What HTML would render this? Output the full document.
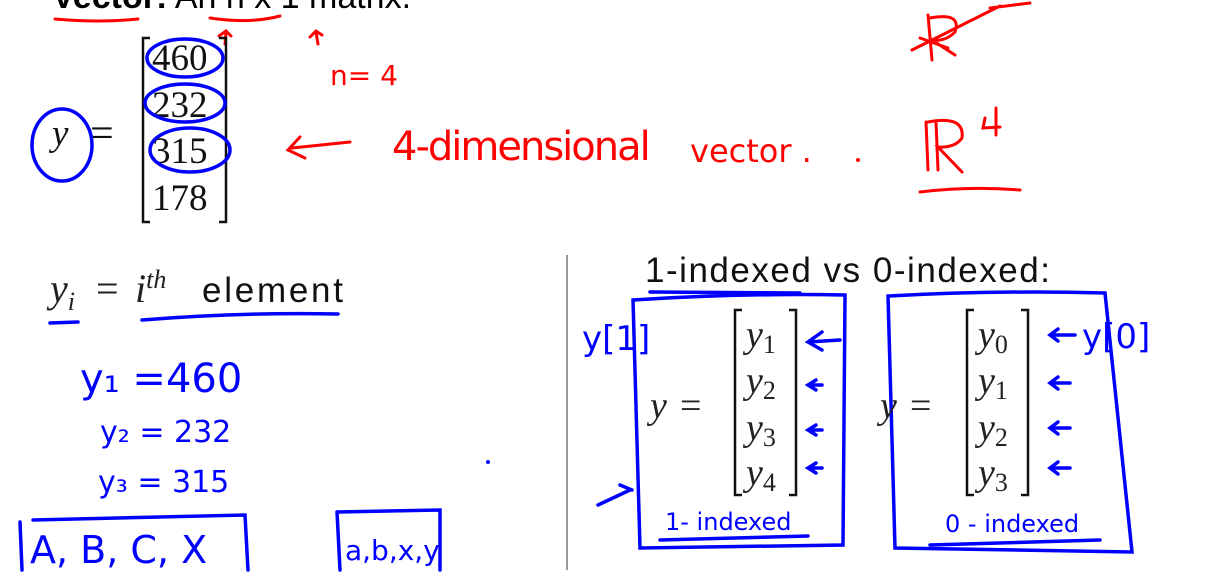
<!DOCTYPE html><html><head><style>
body{margin:0;width:1220px;height:581px;background:#fff;overflow:hidden;position:relative}
svg{position:absolute;left:0;top:0}
</style></head><body>
<svg width="1220" height="581" viewBox="0 0 1220 581">
<text x="52" y="8" font-family="Liberation Sans, sans-serif" font-size="34"><tspan font-weight="bold">Vector:</tspan> An n x 1 matrix.</text>
<g fill="none" stroke="#f00" stroke-width="3" stroke-linecap="round">
<path d="M55 19 Q100 23 138 19"/><path d="M210 18 Q250 24 280 16"/>
<path d="M225 44 L226 33 M219 36 L226 31 L231 36"/><path d="M318 44 L316 32 M310 37 L316 31 L322 35"/>
<path d="M292 148 L350 142 M300 137 L288 150 L305 158"/>
<path d="M920 38 L948 48 M928 15 L932 60 M930 18 Q962 12 955 32 Q945 42 932 40 L955 55 M912 50 L1000 6 M990 8 L1030 3"/>
<path d="M926 122 L928 170 M936 122 L938 170 M928 122 Q965 115 962 138 Q955 148 938 147 L962 172"/>
<path d="M985 118 L983 128 L1000 127 M996 108 L996 135"/>
<path d="M920 192 Q970 186 1020 190"/>
</g>
<g font-family="DejaVu Sans, sans-serif" fill="#f00">
<text x="330" y="85" font-size="28">n= 4</text>
<text x="392" y="160" font-size="40" letter-spacing="-2">4-dimensional</text>
<text x="690" y="162" font-size="32">vector .</text>
</g>
<g font-family="Liberation Serif, serif" font-size="37" fill="#111">
<text x="152" y="70">460</text><text x="152" y="117">232</text><text x="152" y="163">315</text><text x="152" y="210">178</text>
<text x="52" y="145" font-style="italic">y</text><text x="90" y="147" font-size="42">=</text>
</g>
<g fill="none" stroke="#111" stroke-width="2.5">
<path d="M150 38 H143 V222 H150"/><path d="M219 38 H226 V222 H219"/>
<path d="M567 255 V570" stroke="#777" stroke-width="1.5"/>
<path d="M742 310 H735 V495 H742"/><path d="M789 310 H796 V495 H789"/>
<path d="M974 310 H967 V495 H974"/><path d="M1021 310 H1028 V495 H1021"/>
</g>
<g fill="none" stroke="#00f" stroke-width="3.5" stroke-linecap="round">
<ellipse cx="185" cy="58" rx="38" ry="19"/><ellipse cx="185" cy="103" rx="40" ry="19"/><ellipse cx="190" cy="150" rx="40" ry="22"/>
<ellipse cx="62" cy="145" rx="30" ry="36"/>
<path d="M50 323 L78 322 M142 320 Q240 312 338 314 M650 292 L800 293"/>
<path d="M633 300 Q740 293 845 295 L843 545 L640 548 Z"/>
<path d="M888 296 Q1000 290 1105 293 L1132 552 L895 548 Z"/>
<path d="M660 540 L808 536 M930 545 L1100 540"/>
<path d="M20 522 L22 570 M33 520 L245 515 L248 570 M337 512 L340 570 M337 512 L440 510 L440 570"/>
<path d="M840 340 L808 342 M822 332 L808 342 L822 350"/>
<path d="M822 385 L808 385 M816 380 L808 385 L816 390 M822 430 L808 430 M816 425 L808 430 L816 435 M822 468 L808 468 M816 463 L808 468 L816 473"/>
<path d="M1075 335 L1050 335 M1058 329 L1050 335 L1058 341 M1070 383 L1050 383 M1058 377 L1050 383 L1058 389 M1070 428 L1050 428 M1058 422 L1050 428 L1058 434 M1070 468 L1050 468 M1058 462 L1050 468 L1058 474"/>
<path d="M598 505 L630 490 M620 485 L632 490"/>
</g>
<g font-family="DejaVu Sans, sans-serif" fill="#00f">
<text x="80" y="392" font-size="40">y₁ =460</text>
<text x="100" y="442" font-size="30">y₂ = 232</text>
<text x="98" y="492" font-size="30">y₃ = 315</text>
<text x="30" y="563" font-size="38">A, B, C, X</text>
<text x="345" y="560" font-size="28">a,b,x,y</text>
<text x="582" y="350" font-size="34">y[1]</text>
<text x="1082" y="348" font-size="34">y[0]</text>
<text x="665" y="530" font-size="24">1- indexed</text>
<text x="945" y="532" font-size="24">0 - indexed</text>
</g>
<g font-family="Liberation Serif, serif" font-size="40" fill="#222">
<text x="50" y="302" font-style="italic">y<tspan font-size="26" dy="8">i</tspan></text>
<text x="96" y="302">=</text>
<text x="135" y="302" font-style="italic">i<tspan font-size="26" dy="-14">th</tspan></text>
</g>
<g font-family="Liberation Serif, serif" font-size="38" fill="#222">
<text x="650" y="418" font-style="italic">y</text><text x="680" y="418">=</text>
<text x="880" y="418" font-style="italic">y</text><text x="910" y="418">=</text>
<text x="746" y="347"><tspan font-style="italic">y</tspan><tspan font-size="26" dy="6">1</tspan></text>
<text x="746" y="393"><tspan font-style="italic">y</tspan><tspan font-size="26" dy="6">2</tspan></text>
<text x="746" y="440"><tspan font-style="italic">y</tspan><tspan font-size="26" dy="6">3</tspan></text>
<text x="746" y="485"><tspan font-style="italic">y</tspan><tspan font-size="26" dy="6">4</tspan></text>
<text x="978" y="347"><tspan font-style="italic">y</tspan><tspan font-size="26" dy="6">0</tspan></text>
<text x="978" y="393"><tspan font-style="italic">y</tspan><tspan font-size="26" dy="6">1</tspan></text>
<text x="978" y="440"><tspan font-style="italic">y</tspan><tspan font-size="26" dy="6">2</tspan></text>
<text x="978" y="485"><tspan font-style="italic">y</tspan><tspan font-size="26" dy="6">3</tspan></text>
</g>
<g font-family="Liberation Sans, sans-serif" font-size="35" fill="#111">
<text x="202" y="302" textLength="141">element</text>
<text x="645" y="282" textLength="405">1-indexed vs 0-indexed:</text>
</g>
<circle cx="488" cy="462" r="2" fill="#00f"/><circle cx="858" cy="160" r="2" fill="#f00"/>
</svg>
</body></html>
